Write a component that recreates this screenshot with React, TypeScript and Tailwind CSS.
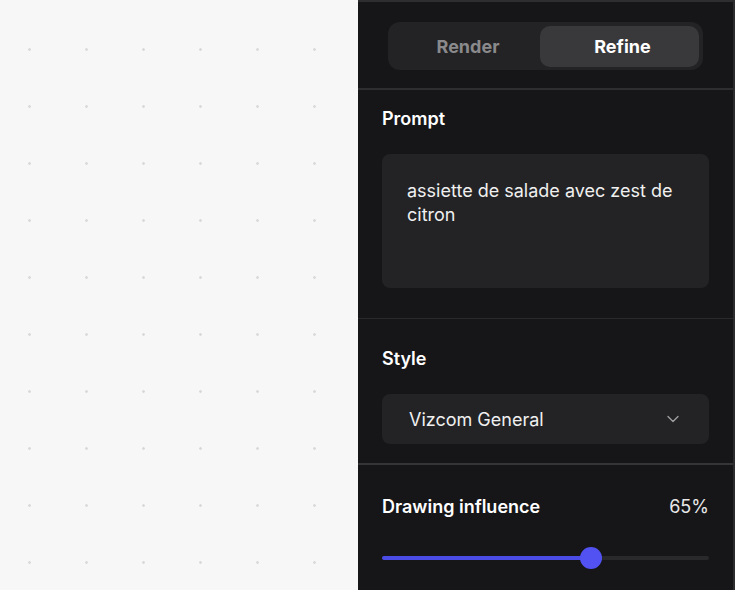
import { ChevronDown } from "lucide-react";

const font = { fontFamily: "Inter, 'Noto Sans', sans-serif" };

const Canvas = () => (
  <div className="flex-1 h-full bg-[#f7f7f7] bg-[radial-gradient(circle,#dadada_1px,transparent_1.6px)] bg-[size:57px_57px] bg-[position:1px_21px]"></div>
);

const Panel = () => {
  const influence = 65;

  return (
    <div className="w-[377px] h-full bg-[#161618] border-t-2 border-t-[#2e2e30] border-r-2 border-r-[#2c2c2e] flex flex-col text-white">
      <div className="px-[30px] pt-5 pb-[18px] border-b-2 border-[#2e2e30]">
        <div className="flex h-12 rounded-xl bg-[#232325] pl-1 pr-1 pt-1 pb-[3px]">
          <button className="flex-1 pl-1 rounded-[10px] text-[18px] font-bold text-[#8a8a8c]">
            Render
          </button>
          <button className="w-[159px] pl-[6px] rounded-[10px] bg-[#39393b] text-[18px] font-bold text-white">
            Refine
          </button>
        </div>
      </div>

      <div className="px-6 pt-[17px] pb-[30px] border-b border-[#2a2a2c]">
        <p className="text-[18px] leading-6 font-semibold">Prompt</p>
        <div className="mt-[23px] h-[134px] rounded-lg bg-[#232325] px-[25px] pt-[25px] text-[18px] leading-6 text-[#f0f0f0]">
          assiette de salade avec zest de citron
        </div>
      </div>

      <div className="px-6 pt-7 pb-[19px] border-b-2 border-[#353537]">
        <p className="text-[18px] leading-6 font-semibold">Style</p>
        <div className="mt-[23px] h-[50px] rounded-lg bg-[#232325] pl-[27px] pr-[26px] flex items-center justify-between">
          <span className="text-[18px] text-[#f0f0f0]">Vizcom General</span>
          <ChevronDown size={20} strokeWidth={1.6} color="#a0a0a2" />
        </div>
      </div>

      <div className="px-6 pt-[28px]">
        <div className="flex items-center justify-between">
          <p className="text-[18px] leading-6 font-semibold">Drawing influence</p>
          <span className="text-[18px] text-[#e8e8e8]">{influence}%</span>
        </div>
        <div className="relative mt-[36px] h-1 rounded-full bg-[#29292b]">
          <div
            className="h-1 rounded-full bg-[#4b4be6]"
            style={{ width: `${influence - 1}%` }}
          ></div>
          <div
            className="absolute top-1/2 w-[22px] h-[22px] -translate-x-1/2 -translate-y-1/2 rounded-full bg-[#5252f2]"
            style={{ left: `${influence - 1}%` }}
          ></div>
        </div>
      </div>
    </div>
  );
};

export default function App() {
  return (
    <div className="flex w-[735px] h-[590px] overflow-hidden" style={font}>
      <Canvas />
      <Panel />
    </div>
  );
}
